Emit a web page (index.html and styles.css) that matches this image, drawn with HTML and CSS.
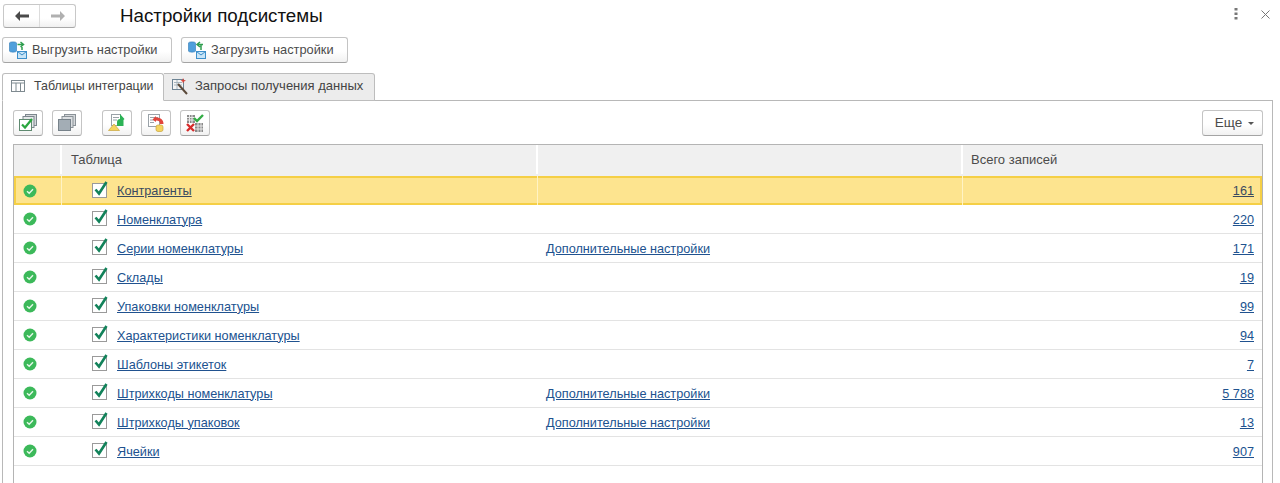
FILE: index.html
```html
<!DOCTYPE html>
<html lang="ru">
<head>
<meta charset="utf-8">
<title>Настройки подсистемы</title>
<link rel="stylesheet" href="styles.css">
</head>
<body>
<svg class="defs" width="0" height="0" aria-hidden="true">
  <defs>
    <symbol id="ok" viewBox="0 0 14 14">
      <circle cx="7" cy="7" r="6.5" fill="#3cb95a"/>
      <path d="M4 7.2l2.200 2.100L10 5.200" fill="none" stroke="#e6f7ea" stroke-width="1.400"/>
    </symbol>
    <symbol id="check" viewBox="0 0 17 18">
      <rect x="0.500" y="3.500" width="14" height="14" fill="#fff" stroke="#9a9a9a"/>
      <path d="M3.500 9.500l3.500 4L14.500 2" fill="none" stroke="#12825a" stroke-width="2.600"/>
    </symbol>
    <symbol id="db-mail" viewBox="0 0 18 18">
      <path d="M.5 2C.5.500 7.500.500 7.500 2v8c0 1.500-7 1.500-7 0z" fill="#4f9fdc" stroke="#2f78b5" stroke-width=".6"/>
      <rect x="8.500" y="10.500" width="9" height="7" fill="#c9e5f7" stroke="#3d8fca"/>
      <path d="M8.500 10.500l4.500 3.500 4.500-3.500" fill="none" stroke="#3d8fca"/>
    </symbol>
  </defs>
</svg>

<header class="topbar">
  <div class="nav">
    <button class="nav-btn" type="button" aria-label="Назад">
      <svg width="16" height="12" viewBox="0 0 16 12"><path d="M1 6l5-5v3.500h9v3H6V11z" fill="#4a4a4a"/></svg>
    </button>
    <button class="nav-btn" type="button" aria-label="Вперёд">
      <svg width="16" height="12" viewBox="0 0 16 12"><path d="M15 6l-5-5v3.500H1v3h9V11z" fill="#b0b0b0"/></svg>
    </button>
  </div>
  <h1 class="title">Настройки подсистемы</h1>
  <div class="win-tools">
    <svg width="4" height="12" viewBox="0 0 4 12"><g fill="#777"><rect x="0.500" width="3" height="2.500"/><rect x="0.500" y="4.500" width="3" height="2.500"/><rect x="0.500" y="9" width="3" height="2.500"/></g></svg>
    <svg width="9" height="9" viewBox="0 0 9 9"><path d="M.5.5l8 8M8.500.5l-8 8" stroke="#777" fill="none"/></svg>
  </div>
</header>

<div class="actions">
  <button class="btn action" type="button">
    <svg width="18" height="18" viewBox="0 0 18 18"><use href="#db-mail"/><path d="M8.500 3.500h6M11.500 1l3 2.500-3 2.500M13 6v3" fill="none" stroke="#2f9e4f" stroke-width="1.500"/></svg>
    Выгрузить настройки
  </button>
  <button class="btn action" type="button">
    <svg width="18" height="18" viewBox="0 0 18 18"><use href="#db-mail"/><path d="M15 3.500H9M12 1L9 3.500 12 6M13 4v5" fill="none" stroke="#2f9e4f" stroke-width="1.500"/></svg>
    Загрузить настройки
  </button>
</div>

<nav class="tabs">
  <div class="tab active">
    <svg width="14" height="13" viewBox="0 0 14 13"><g fill="none" stroke="#7f8a90"><rect x=".5" y=".5" width="13" height="11"/><path d="M.5 3h13M5 3v8.500M9.500 3v8.500"/></g></svg>
    Таблицы интеграции
  </div>
  <div class="tab">
    <svg width="16" height="18" viewBox="0 0 16 18"><rect x=".5" y="2.500" width="11" height="10" fill="#f4f4f4" stroke="#6d8494"/><path d="M2 5.500h8M2 8h8M5 3v9" stroke="#a6b4bd" fill="none"/><path d="M6 7l9 10" stroke="#5b4a3a" stroke-width="2"/><path d="M11 1l1 2 2 .5-2 1-1 2-.5-2-2-1 2-.5z" fill="#d8433a"/></svg>
    Запросы получения данных
  </div>
</nav>

<main class="panel">
  <div class="toolbar">
    <button class="btn tool" type="button" aria-label="Отметить все">
      <svg width="18" height="18" viewBox="0 0 18 18"><rect x="6.500" y=".5" width="11" height="11" fill="#d5d8db" stroke="#7d878e"/><rect x="4" y="2.500" width="11" height="11" fill="#e6e8ea" stroke="#7d878e"/><rect x=".5" y="5.500" width="12" height="11" fill="#fff" stroke="#5f8a70"/><path d="M3 10.500l3 3L13 5" fill="none" stroke="#2aa63f" stroke-width="2.200"/></svg>
    </button>
    <button class="btn tool" type="button" aria-label="Снять отметки">
      <svg width="18" height="18" viewBox="0 0 18 18"><rect x="6.500" y=".5" width="11" height="11" fill="#d5d8db" stroke="#8a9298"/><rect x="4" y="2.500" width="11" height="11" fill="#dcdfe2" stroke="#8a9298"/><rect x=".5" y="5.500" width="12" height="11" fill="#a3adb5" stroke="#77828a"/></svg>
    </button>
    <button class="btn tool gap" type="button" aria-label="Выгрузить">
      <svg width="18" height="18" viewBox="0 0 18 18"><rect x="3.500" y=".5" width="9" height="11" fill="#fff" stroke="#9aa2a8"/><path d="M5 3.500h6M5 6h4" stroke="#9aa2a8"/><path d="M12 0l4.500 5-1 1V12H9V8c0-2 1.500-3 3-3z" fill="#2bb255"/><path d="M6 10L.5 16.500h11z" fill="#f4d45f" stroke="#c8a53c" stroke-width=".7"/></svg>
    </button>
    <button class="btn tool" type="button" aria-label="Загрузить">
      <svg width="18" height="18" viewBox="0 0 18 18"><rect x="1.500" y=".5" width="11" height="12" fill="#fff" stroke="#9aa2a8"/><path d="M3 3.500h8M3 6h5M3 8.500h4" stroke="#9aa2a8"/><path d="M9 2L5.500 5.500 9 8V6.500c3 0 4 1 4 3.500h3.500c0-4-2.500-6.500-7.500-6.500z" fill="#e2453c"/><rect x="9" y="11" width="7" height="6.500" rx="2" fill="#f4d45f" stroke="#c8a53c" stroke-width=".7"/></svg>
    </button>
    <button class="btn tool" type="button" aria-label="Очистить">
      <svg width="18" height="18" viewBox="0 0 18 18"><g fill="#8a8a8a"><rect x="1" y="1" width="8" height="8"/><rect x="9" y="9" width="8" height="9"/></g><path d="M1 3.500h8M1 6h8M3.500 1v8M6 1v8M9 12h8M9 15h8M12 9v9M15 9v9" stroke="#e8e8e8"/><path d="M8 4l3 3 6-6" fill="none" stroke="#33ad45" stroke-width="2.400"/><path d="M1 10l7 7M8 10l-7 7" stroke="#d62b2b" stroke-width="2.400"/></svg>
    </button>
    <button class="btn more" type="button">Еще <span class="caret"></span></button>
  </div>

  <div class="table">
    <div class="row head">
      <div class="c-status"></div>
      <div class="c-name">Таблица</div>
      <div class="c-extra"></div>
      <div class="c-total">Всего записей</div>
    </div>
    <div class="row current">
      <div class="c-status"><svg class="ok"><use href="#ok"/></svg></div>
      <div class="c-name"><svg class="check"><use href="#check"/></svg><a class="link">Контрагенты</a></div>
      <div class="c-extra"></div>
      <div class="c-total"><a class="link">161</a></div>
    </div>
    <div class="row">
      <div class="c-status"><svg class="ok"><use href="#ok"/></svg></div>
      <div class="c-name"><svg class="check"><use href="#check"/></svg><a class="link">Номенклатура</a></div>
      <div class="c-extra"></div>
      <div class="c-total"><a class="link">220</a></div>
    </div>
    <div class="row">
      <div class="c-status"><svg class="ok"><use href="#ok"/></svg></div>
      <div class="c-name"><svg class="check"><use href="#check"/></svg><a class="link">Серии номенклатуры</a></div>
      <div class="c-extra"><a class="link">Дополнительные настройки</a></div>
      <div class="c-total"><a class="link">171</a></div>
    </div>
    <div class="row">
      <div class="c-status"><svg class="ok"><use href="#ok"/></svg></div>
      <div class="c-name"><svg class="check"><use href="#check"/></svg><a class="link">Склады</a></div>
      <div class="c-extra"></div>
      <div class="c-total"><a class="link">19</a></div>
    </div>
    <div class="row">
      <div class="c-status"><svg class="ok"><use href="#ok"/></svg></div>
      <div class="c-name"><svg class="check"><use href="#check"/></svg><a class="link">Упаковки номенклатуры</a></div>
      <div class="c-extra"></div>
      <div class="c-total"><a class="link">99</a></div>
    </div>
    <div class="row">
      <div class="c-status"><svg class="ok"><use href="#ok"/></svg></div>
      <div class="c-name"><svg class="check"><use href="#check"/></svg><a class="link">Характеристики номенклатуры</a></div>
      <div class="c-extra"></div>
      <div class="c-total"><a class="link">94</a></div>
    </div>
    <div class="row">
      <div class="c-status"><svg class="ok"><use href="#ok"/></svg></div>
      <div class="c-name"><svg class="check"><use href="#check"/></svg><a class="link">Шаблоны этикеток</a></div>
      <div class="c-extra"></div>
      <div class="c-total"><a class="link">7</a></div>
    </div>
    <div class="row">
      <div class="c-status"><svg class="ok"><use href="#ok"/></svg></div>
      <div class="c-name"><svg class="check"><use href="#check"/></svg><a class="link">Штрихкоды номенклатуры</a></div>
      <div class="c-extra"><a class="link">Дополнительные настройки</a></div>
      <div class="c-total"><a class="link">5 788</a></div>
    </div>
    <div class="row">
      <div class="c-status"><svg class="ok"><use href="#ok"/></svg></div>
      <div class="c-name"><svg class="check"><use href="#check"/></svg><a class="link">Штрихкоды упаковок</a></div>
      <div class="c-extra"><a class="link">Дополнительные настройки</a></div>
      <div class="c-total"><a class="link">13</a></div>
    </div>
    <div class="row">
      <div class="c-status"><svg class="ok"><use href="#ok"/></svg></div>
      <div class="c-name"><svg class="check"><use href="#check"/></svg><a class="link">Ячейки</a></div>
      <div class="c-extra"></div>
      <div class="c-total"><a class="link">907</a></div>
    </div>
  </div>
</main>
</body>
</html>
```

FILE: styles.css
```css
* { box-sizing: border-box; }
html, body { margin: 0; height: 483px; overflow: hidden; }
body {
  background: #fff;
  color: #4b4b4b;
  font: 12.7px/16px "Liberation Sans", Arial, sans-serif;
}
.defs { position: absolute; }
button { font: inherit; color: inherit; margin: 0; cursor: default; }

.topbar { display: flex; align-items: center; height: 37px; padding: 3px 0 8px 3px; }
.nav {
  display: flex; width: 73px; height: 24px;
  border: 1px solid #c8c8c8; border-bottom-color: #a8a8a8; border-radius: 3px;
  background: linear-gradient(#fff 60%, #f0f0f0);
}
.nav-btn { flex: 1; display: flex; align-items: center; justify-content: center; padding: 0; border: 0; background: none; }
.nav-btn + .nav-btn { border-left: 1px solid #dcdcdc; }
.title { margin: 0 0 0 44px; font-size: 18.75px; line-height: 24px; font-weight: 400; color: #111; }
.win-tools { margin-left: auto; display: flex; align-items: center; gap: 23px; padding: 0 10px 4px 0; }

.btn {
  display: flex; align-items: center; justify-content: center;
  border: 1px solid #c4c4c4; border-bottom-color: #a4a4a4; border-radius: 3px;
  background: linear-gradient(#fff 55%, #f1f1f1);
}
.actions { display: flex; gap: 9px; padding-left: 2px; height: 36px; font-size: 12.8px; }
.action { height: 26px; padding: 0 0 0 6px; gap: 5px; justify-content: flex-start; white-space: nowrap; }
.action:first-child { width: 170px; }
.action:last-child { width: 167px; }

.tabs { display: flex; padding-left: 2px; height: 28px; position: relative; z-index: 1; }
.tab {
  display: flex; align-items: center; gap: 7px; white-space: nowrap;
  height: 28px; padding: 0 6px 2px 8px; width: 211px;
  border: 1px solid #bdbdbd; border-left: 0; border-radius: 0 3px 0 0;
  background: #ececec; font-size: 13px; color: #444;
}
.tab svg { flex: none; }
.tab.active {
  width: 162px; gap: 9px; padding-left: 8px; border-left: 1px solid #bdbdbd;
  border-bottom-color: #fff; background: #fff; border-radius: 3px 3px 0 0;
  font-size: 12.4px;
}

.panel {
  margin: -1px 7px 0 2px; height: 384px; padding: 9px 9px 0 10px;
  border: 1px solid #b8b8b8; border-bottom: 0;
}
.toolbar { display: flex; gap: 9px; height: 34px; }
.tool { width: 30px; height: 26px; padding: 0; }
.tool.gap { margin-left: 11px; }
.more { margin-left: auto; width: 61px; height: 26px; gap: 6px; padding: 0 0 0 4px; font-size: 13.5px; }
.caret { width: 0; height: 0; border: 3px solid transparent; border-top: 3px solid #555; border-bottom: 0; }

.table { width: 1250px; height: 340px; border: 1px solid #b4b4b4; border-bottom: 0; }
.row {
  display: grid; grid-template-columns: 48px 476px 425px 1fr;
  height: 29px; padding-top: 1px; align-items: center;
  border-bottom: 1px solid #e3e3e3;
}
.head { height: 31px; padding: 0 0 2px; background: #f0f0f0; border-bottom: 0; align-items: stretch; font-size: 13px; }
.head > div { display: flex; align-items: center; border-right: 2px solid #fff; }
.head > div:last-child { border-right: 0; }
.row.current {
  background: #fde48f; border-bottom: 0; padding-top: 0;
  box-shadow: inset 0 0 0 2px #f5cf45;
}
.current > div { height: 100%; display: flex; align-items: center; border-right: 1px solid #fff3c4; }
.current > div:last-child { border-right: 0; justify-content: flex-end; }
.c-status { display: flex; align-items: center; justify-content: flex-start; padding-left: 9px; height: 100%; }
.c-name { display: flex; align-items: center; padding-left: 9px; height: 100%; }
.row:not(.head) .c-name { padding-left: 30px; }
.c-extra { padding-left: 8px; }
.c-total { padding: 0 8px; text-align: right; }
.head .c-total { text-align: left; }
.ok { width: 14px; height: 14px; margin-top: -2px; }
.check { width: 17px; height: 18px; margin-right: 8px; margin-top: -6px; flex: none; }
.current .ok { margin-top: 0; }
.current .check { margin-top: -4px; }
.link { color: #20528f; text-decoration: underline; }
.current .link { color: #3a4a60; }
```
